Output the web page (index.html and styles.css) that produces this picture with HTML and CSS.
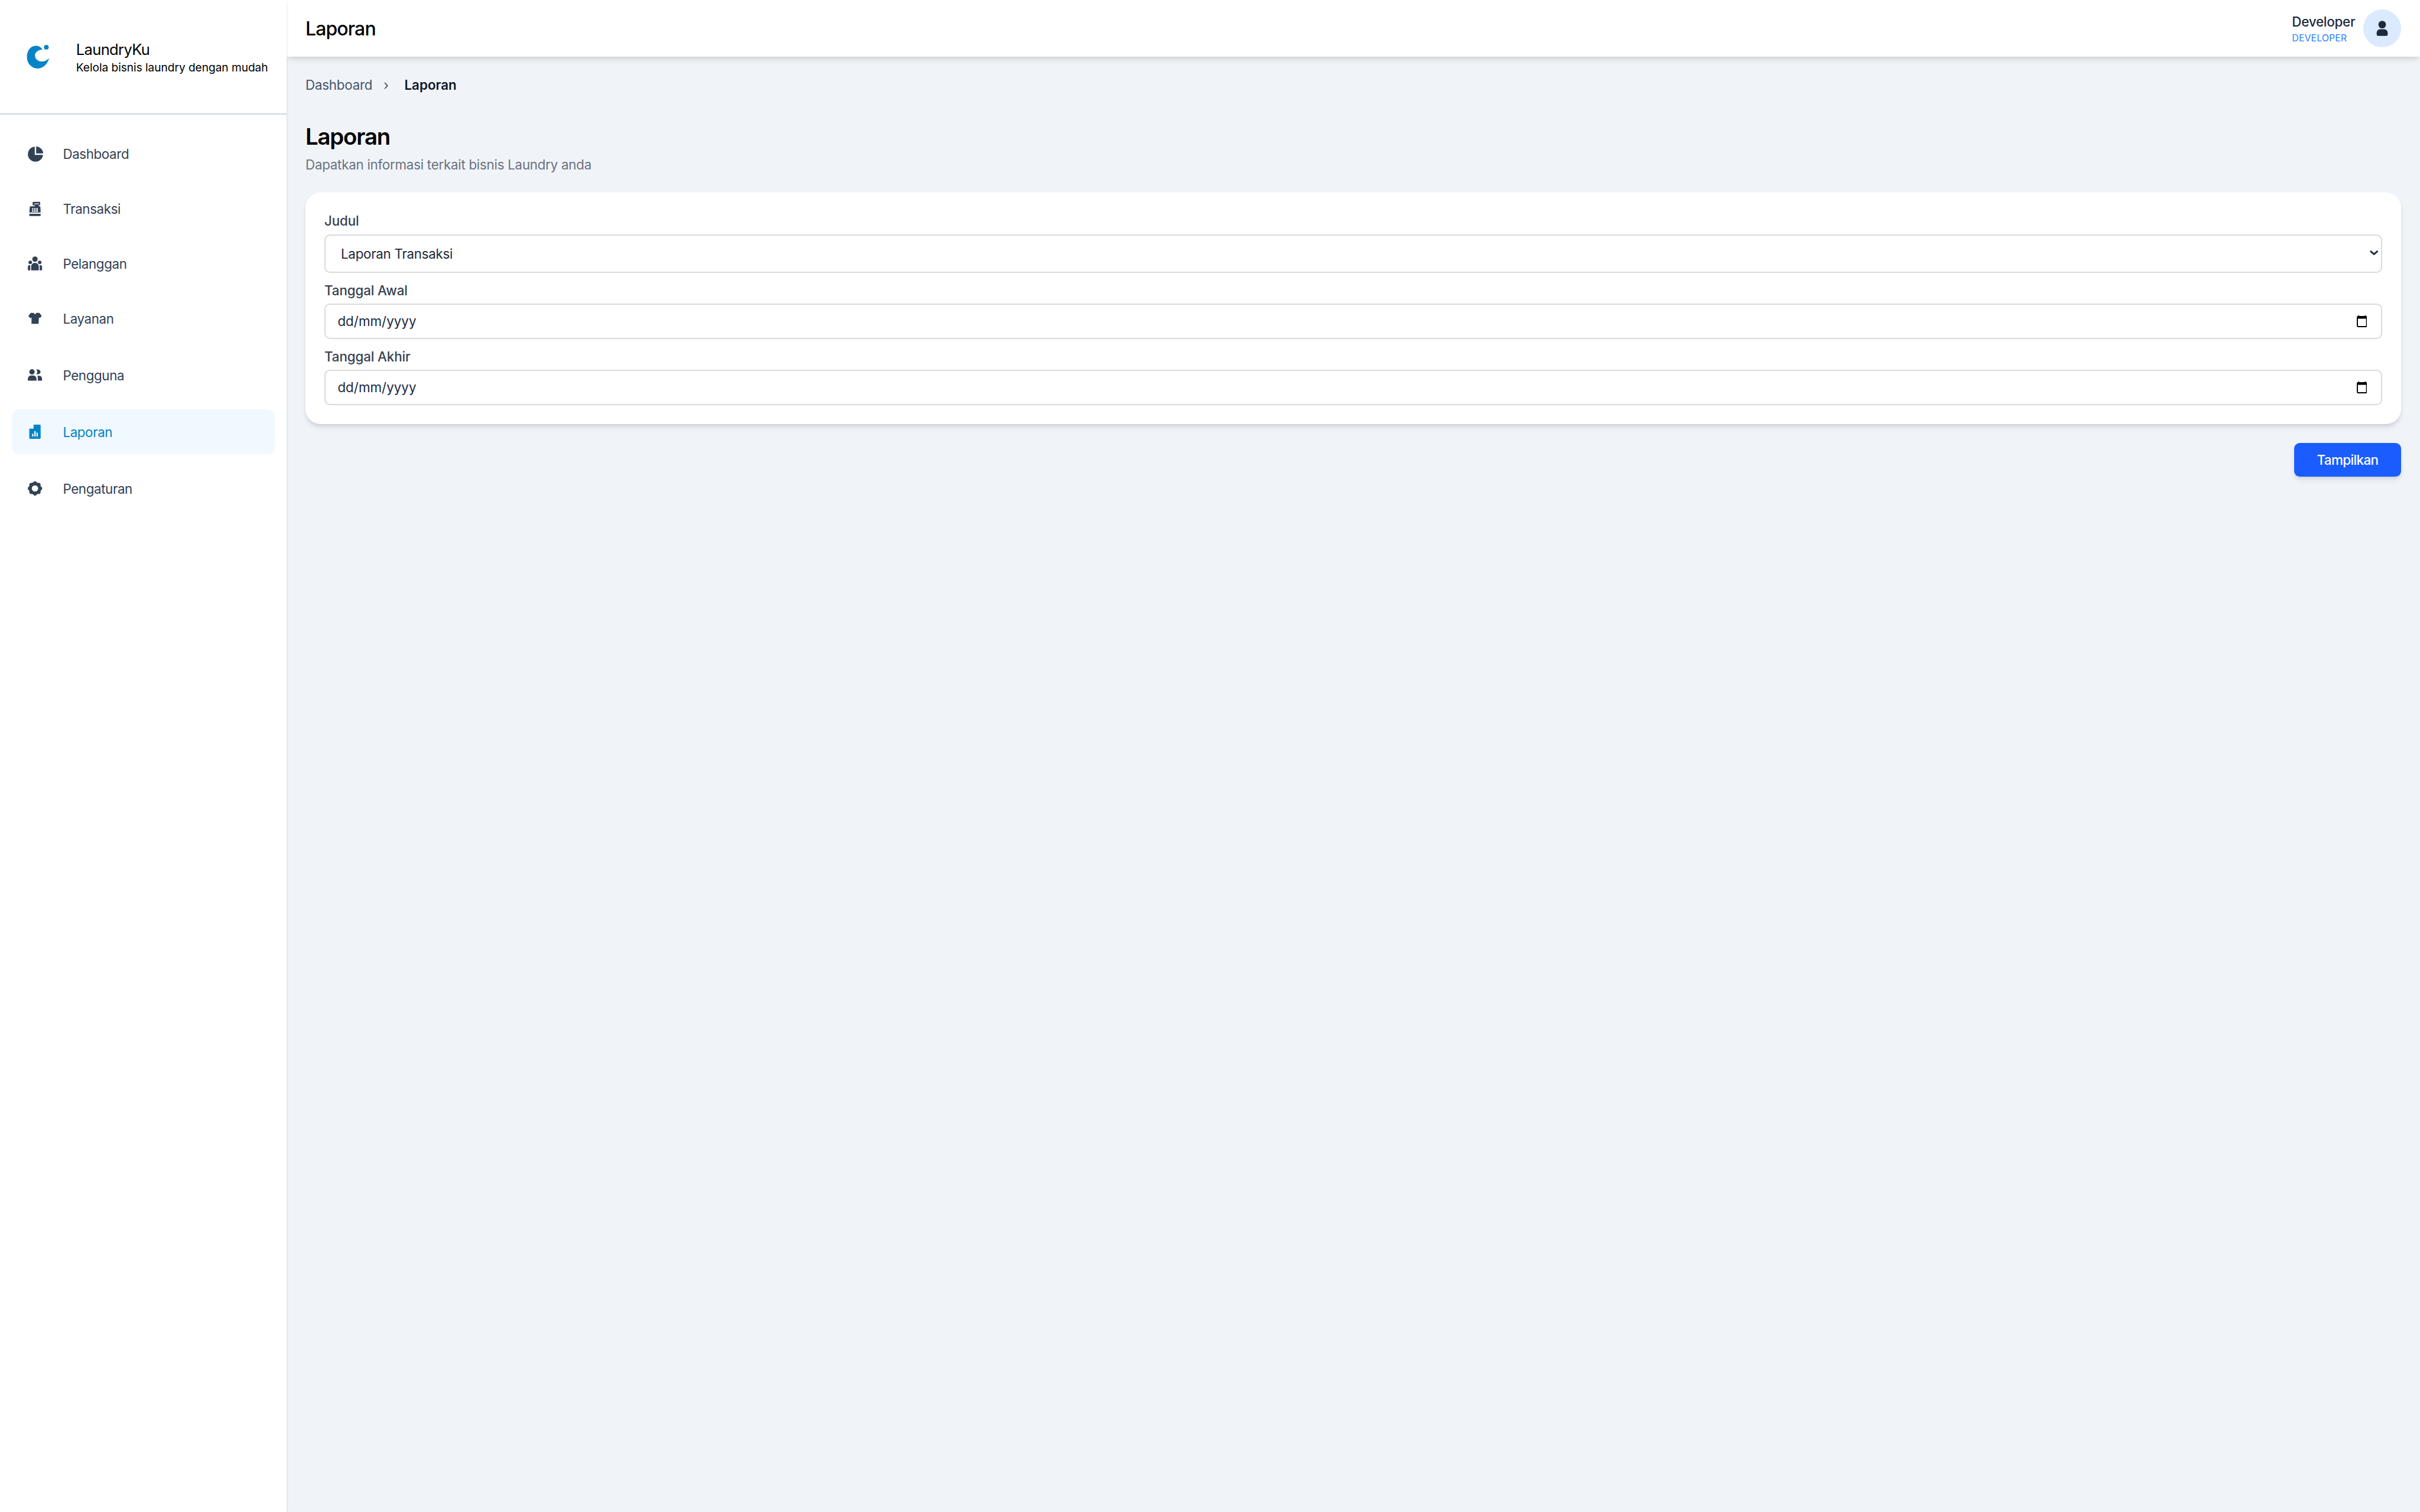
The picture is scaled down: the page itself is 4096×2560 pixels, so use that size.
FILE: index.html
```html
<!DOCTYPE html>
<html lang="id">
<head>
<meta charset="utf-8">
<title>Laporan - LaundryKu</title>
<link rel="stylesheet" href="styles.css">
</head>
<body>
<div class="app">
  <aside class="sidebar">
    <div class="brand">
      <svg class="brand-logo" viewBox="0 0 60 60"><path class="fill-blue" d="M40 15C36 9 31 7 26 7C14 7 7 18 7 31C7 44 17 55 29 55C41 55 50 46 54 33C49 38 43 41 36 40C28 39 24 33 24 27C24 21 31 15 40 15Z"/><circle class="fill-blue" cx="48" cy="10" r="5"/></svg>
      <div class="brand-text">
        <div class="brand-name">LaundryKu</div>
        <div class="brand-tag">Kelola bisnis laundry dengan mudah</div>
      </div>
    </div>
    <nav class="nav">
      <a class="nav-item short">
        <svg class="nav-icon" viewBox="0 0 40 40"><path d="M18.5 4.1V21.5H35.9A16 16 0 1 1 18.5 4.1Z"/><path d="M21.5 3.5A16.5 16.5 0 0 1 36.5 18.5H21.5Z"/></svg>
        <span>Dashboard</span>
      </a>
      <a class="nav-item short">
        <svg class="nav-icon" viewBox="0 0 40 40"><path fill-rule="evenodd" d="M15.5 4.7H29a1.5 1.5 0 0 1 1 1.5V10.5a1.5 1.5 0 0 1-1.5 1.5H27V14H28.5a2 2 0 0 1 2 1.8L31 27.300H7L8 15.800A2 2 0 0 1 10 14H18.300V12H15.500A1.500 1.500 0 0 1 14 10.500V6.200A1.500 1.500 0 0 1 15.500 4.700ZM17.700 8V9.700H27.700V8ZM13 18V21.300H15.700V18ZM17.300 18V21.300H20.300V18ZM21.700 18V21.300H25V18ZM13 22.300V26H15.700V22.300ZM17.300 22.300V26H20.300V22.300ZM21.700 22.300V26H25V22.300Z"/><rect x="7" y="30" width="24" height="4.700" rx="1"/></svg>
        <span>Transaksi</span>
      </a>
      <a class="nav-item short">
        <svg class="nav-icon" viewBox="0 0 40 40"><circle cx="19" cy="11" r="5.700"/><circle cx="9" cy="17.700" r="3.700"/><circle cx="29" cy="17.700" r="3.700"/><path d="M11 34.700V26A8 7.300 0 0 1 27 26V34.700Z"/><path d="M4 34.700V27C4 25 6 23.500 9 23.500V34.700Z"/><path d="M34 34.700V27C34 25 32 23.500 29 23.500V34.700Z"/></svg>
        <span>Pelanggan</span>
      </a>
      <a class="nav-item short nav-item-last-short">
        <svg class="nav-icon" viewBox="0 0 40 40"><path d="M10 8.300H16L19 11.600L22 8.300H28.300L33.300 15L29.300 19.300L27.300 17.700L26.700 31.700H11.700V17.700L9 20L5 15Z"/></svg>
        <span>Layanan</span>
      </a>
      <a class="nav-item">
        <svg class="nav-icon" viewBox="0 0 40 40"><circle cx="12.700" cy="13.300" r="5.700"/><path d="M4 32V28C4 24 7 21 11 21H15C19 21 22.300 24 22.300 28V32Z"/><path d="M21.700 8.300C27 7.500 30.700 10 30.700 13.300C30.700 16.500 27 19 21.700 18.300C24.500 15.500 24.500 11 21.700 8.300Z"/><path d="M24.300 21.700H28C31.500 21.700 34 24.500 34 28V32H25V28C25 25.500 25 23.500 24.300 21.700Z"/></svg>
        <span>Pengguna</span>
      </a>
      <a class="nav-item active">
        <svg class="nav-icon" viewBox="0 0 40 40"><path d="M16 5H29A2 2 0 0 1 31 7V33A2 2 0 0 1 29 35H9A2 2 0 0 1 7 33V13.300H16Z"/><path d="M15 6V12H9Z" class="fold"/><rect class="bar" x="13" y="24.300" width="2.700" height="5.700"/><rect class="bar" x="17.700" y="18.700" width="2.700" height="11.300"/><rect class="bar" x="22.300" y="22" width="2.700" height="8"/></svg>
        <span>Laporan</span>
      </a>
      <a class="nav-item">
        <svg class="nav-icon" viewBox="0 0 40 40"><g class="gear"><circle cx="19" cy="20" r="13.300"/><rect x="16" y="5" width="6" height="6" rx="1.500"/><rect x="16" y="29" width="6" height="6" rx="1.500"/><rect x="4" y="17" width="6" height="6" rx="1.500"/><rect x="28" y="17" width="6" height="6" rx="1.500"/><rect x="16" y="5" width="6" height="6" rx="1.500" transform="rotate(45 19 20)"/><rect x="16" y="29" width="6" height="6" rx="1.500" transform="rotate(45 19 20)"/><rect x="4" y="17" width="6" height="6" rx="1.500" transform="rotate(45 19 20)"/><rect x="28" y="17" width="6" height="6" rx="1.500" transform="rotate(45 19 20)"/></g><circle class="hole" cx="19" cy="20" r="6.700"/></svg>
        <span>Pengaturan</span>
      </a>
    </nav>
  </aside>
  <div class="main">
    <header class="topbar">
      <div class="topbar-title">Laporan</div>
      <div class="user">
        <div class="user-text">
          <div class="user-name">Developer</div>
          <div class="user-role">DEVELOPER</div>
        </div>
        <div class="avatar">
          <svg class="avatar-icon" viewBox="0 0 80 80"><circle cx="40" cy="32" r="8"/><path d="M28.300 52V50C28.300 45 32 42 36 42H44C48 42 51.700 45 51.700 50V53A3 3 0 0 1 48.700 56H31.300A3 3 0 0 1 28.300 53Z"/></svg>
        </div>
      </div>
    </header>
    <main class="content">
      <div class="crumbs">
        <span class="crumb">Dashboard</span>
        <span class="crumb-sep">›</span>
        <span class="crumb-current">Laporan</span>
      </div>
      <h1 class="page-title">Laporan</h1>
      <p class="page-sub">Dapatkan informasi terkait bisnis Laundry anda</p>
      <form class="card">
        <label class="field-label" for="judul">Judul</label>
        <div class="control">
          <select class="select" id="judul"><option>Laporan Transaksi</option></select>
          <svg class="chevron" viewBox="0 0 18 10"><path d="M1.200 1.200L9 8L16.800 1.200"/></svg>
        </div>
        <label class="field-label spaced" for="awal">Tanggal Awal</label>
        <div class="control">
          <input class="date" id="awal" type="text" value="dd/mm/yyyy" readonly>
          <svg class="calendar" viewBox="0 0 22 25"><path d="M4 0V3M18 0V3" class="cal-tab"/><rect x="1.200" y="2.500" width="19.600" height="21.300" rx="1.500" class="cal-box"/><rect x="1" y="2.500" width="20" height="4.500" class="cal-top"/></svg>
        </div>
        <label class="field-label spaced" for="akhir">Tanggal Akhir</label>
        <div class="control">
          <input class="date" id="akhir" type="text" value="dd/mm/yyyy" readonly>
          <svg class="calendar" viewBox="0 0 22 25"><path d="M4 0V3M18 0V3" class="cal-tab"/><rect x="1.200" y="2.500" width="19.600" height="21.300" rx="1.500" class="cal-box"/><rect x="1" y="2.500" width="20" height="4.500" class="cal-top"/></svg>
        </div>
      </form>
      <div class="actions">
        <button class="btn" type="button">Tampilkan</button>
      </div>
    </main>
  </div>
</div>
</body>
</html>
```
FILE: styles.css
```css
* { box-sizing: border-box; }
html, body { height: 100%; margin: 0; }
body {
  font-family: Inter, "Noto Sans", sans-serif;
  background: #f0f4f9;
  color: #1e293b;
}
.app { display: flex; height: 100%; }

.sidebar {
  width: 485px;
  flex: none;
  background: #fff;
  box-shadow: 0 1.6px 4.8px rgba(0, 0, 0, .12);
  position: relative;
  z-index: 2;
}
.brand {
  height: 193.6px;
  display: flex;
  align-items: center;
  padding-left: 40px;
  gap: 40.8px;
  border-bottom: 2px solid #cbd5e1;
}
.brand-logo { width: 48px; height: 48px; flex: none; }
.fill-blue { fill: #0284c7; }
.brand-text { margin-top: 4.8px; }
.brand-name { font-size: 25.6px; line-height: 32px; color: #000; letter-spacing: -.7px; }
.brand-tag { font-size: 19.2px; line-height: 28.8px; color: #000; letter-spacing: -.08px; }

.nav {
  display: flex;
  flex-direction: column;
  gap: 19.2px;
  padding: 30.4px 19.6px 0;
}
.nav-item {
  height: 76.8px;
  display: flex;
  align-items: center;
  gap: 30.4px;
  padding-left: 24.4px;
  border-radius: 12.8px;
  font-size: 22.4px;
  letter-spacing: -.4px;
  color: #334155;
}
.nav-item.short { height: 73.6px; }
.nav-item-last-short { margin-bottom: 1.6px; }
.nav-item.active { background: #f0f9ff; color: #0284c7; }
.nav-icon { width: 32px; height: 32px; flex: none; fill: #334155; }
.active .nav-icon { fill: #0284c7; }
.nav-icon .fold { fill: #fff; }
.nav-icon .bar { fill: #fff; }
.nav-icon .hole { fill: #fff; }

.main { flex: 1; min-width: 0; display: flex; flex-direction: column; }
.topbar {
  height: 96px;
  flex: none;
  background: #fff;
  display: flex;
  align-items: center;
  justify-content: space-between;
  padding: 0 32px;
  box-shadow: 0 6.4px 9.6px -1.6px rgba(0, 0, 0, .1), 0 3.2px 6.4px -3.2px rgba(0, 0, 0, .1);
  position: relative;
  z-index: 1;
}
.topbar-title { font-size: 32px; font-weight: 500; color: #000; letter-spacing: -.9px; }
.user { display: flex; align-items: center; gap: 13.6px; }
.user-name { font-size: 22.4px; line-height: 32px; font-weight: 500; color: #1e293b; letter-spacing: -.25px; }
.user-role { font-size: 16px; line-height: 22.4px; color: #2b80ff; }
.avatar {
  width: 64px;
  height: 64px;
  border-radius: 50%;
  background: #dbeafe;
  display: flex;
}
.avatar-icon { width: 64px; height: 64px; fill: #1e293b; }

.content { padding: 32px; }
.crumbs {
  display: flex;
  align-items: center;
  font-size: 22.4px;
  line-height: 32px;
  margin-bottom: 45.8px;
}
.crumb { color: #475569; letter-spacing: -.25px; }
.crumb-sep { color: #475569; margin: 0 26.6px 0 19px; }
.crumb-current { font-weight: 600; color: #0f172a; }
.page-title {
  margin: 0 0 6.4px;
  font-size: 38.4px;
  line-height: 51.2px;
  font-weight: 600;
  color: #000;
  letter-spacing: -1.2px;
}
.page-sub {
  margin: 0 0 31px;
  font-size: 22.4px;
  line-height: 32px;
  color: #6b7280;
  letter-spacing: -.28px;
}
.card {
  background: #fff;
  border-radius: 25.6px;
  padding: 32px;
  box-shadow: 0 6.4px 9.6px -1.6px rgba(0, 0, 0, .1), 0 3.2px 6.4px -3.2px rgba(0, 0, 0, .1);
}
.field-label {
  display: block;
  font-size: 22.4px;
  line-height: 32px;
  font-weight: 500;
  color: #374151;
  margin-bottom: 6.4px;
  letter-spacing: -.15px;
}
.field-label.spaced { margin-top: 14.4px; }
.control { position: relative; }
.select, .date {
  display: block;
  width: 100%;
  font-family: inherit;
  font-size: 22.4px;
  color: #1e293b;
  background: #fff;
  border: 2px solid #d7dbe1;
  border-radius: 9.6px;
  outline: none;
}
.select {
  height: 64.8px;
  padding: 0 0 0 26px;
  appearance: none;
  letter-spacing: -.3px;
}
.date {
  height: 59.2px;
  padding: 0 0 0 20.4px;
}
.chevron {
  position: absolute;
  right: 6.4px;
  top: 27px;
  width: 14.4px;
  height: 8px;
  fill: none;
  stroke: #1e293b;
  stroke-width: 3.6;
  pointer-events: none;
}
.calendar {
  position: absolute;
  right: 25.6px;
  top: 19.4px;
  width: 17.6px;
  height: 20px;
  pointer-events: none;
}
.cal-tab { fill: none; stroke: #000; stroke-width: 2.2; }
.cal-box { fill: none; stroke: #000; stroke-width: 2.4; }
.cal-top { fill: #000; }

.actions { display: flex; justify-content: flex-end; margin-top: 32px; }
.btn {
  width: 181px;
  height: 57.6px;
  border: 0;
  border-radius: 9.6px;
  background: #1a5cff;
  color: #fff;
  font-family: inherit;
  font-size: 22.4px;
  font-weight: 500;
  letter-spacing: -.6px;
  box-shadow: 0 6.4px 9.6px -1.6px rgba(0, 0, 0, .1), 0 3.2px 6.4px -3.2px rgba(0, 0, 0, .1);
}
```
